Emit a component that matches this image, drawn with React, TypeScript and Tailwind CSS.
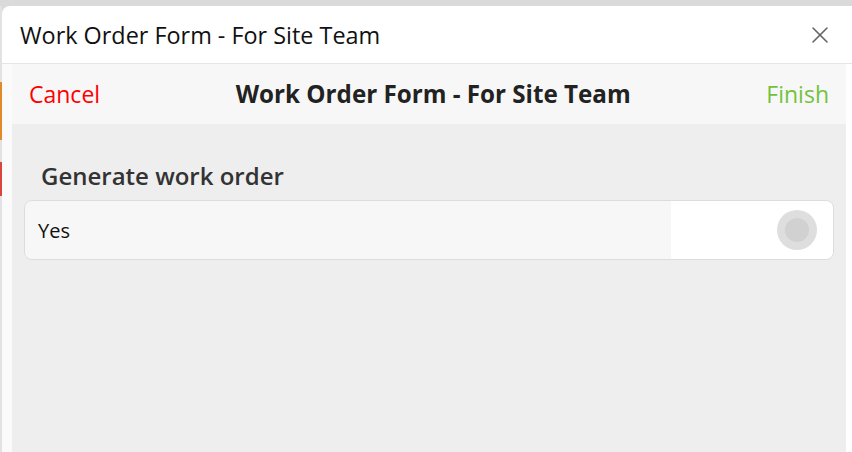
import { X } from "lucide-react";

function Toggle() {
  return (
    <div className="flex h-10 w-10 items-center justify-center rounded-full bg-[#dedede]">
      <div className="h-6 w-6 rounded-full bg-[#d1d1d1]" />
    </div>
  );
}

export default function App() {
  return (
    <div
      className="flex h-[452px] w-[852px] flex-col overflow-hidden bg-[#dadada]"
      style={{ fontFamily: '"Open Sans", "Noto Sans", sans-serif' }}
    >
      <div className="h-[6px] shrink-0" />
      <div className="flex min-h-0 flex-1">
        {/* page behind the modal, peeking on the left */}
        <div className="flex w-[2px] shrink-0 flex-col bg-[#e2e2e2]">
          <div className="h-[76px]" />
          <div className="h-[58px] bg-[#e08a2c]" />
          <div className="h-[22px]" />
          <div className="h-[34px] bg-[#d9443c]" />
        </div>
        <div className="flex min-w-0 flex-1 flex-col overflow-hidden rounded-tl-[8px] bg-white">
          <div className="flex h-[58px] shrink-0 items-center justify-between border-b border-[#e6e6e6] pl-[18px] pr-[18px]">
            <span className="text-[23.4px] leading-[30px] font-medium text-[#111]">Work Order Form - For Site Team</span>
            <X size={28} strokeWidth={1.4} className="text-[#666]" />
          </div>
          <div className="flex min-h-0 flex-1">
            <div className="w-[10px] shrink-0 bg-[#fafafa]" />
            <div className="flex w-[834px] shrink-0 flex-col bg-[#eeeeee]">
              <div className="flex h-[60px] shrink-0 items-center justify-between bg-[#f7f7f7] pl-[17px] pr-[17px]">
                <span className="text-[23px] leading-[30px] text-[#ff0000]">Cancel</span>
                <span className="text-[24.2px] leading-[30px] font-bold text-[#222]">Work Order Form - For Site Team</span>
                <span className="text-[23px] leading-[30px] text-[#74c23c]">Finish</span>
              </div>
              <div className="px-[12px] pt-[37px]">
                <div className="pl-[17px] text-[24px] leading-[30px] font-semibold text-[#333]">Generate work order</div>
                <div className="mt-[9px] flex h-[60px] overflow-hidden rounded-[8px] border border-[#dcdcdc]">
                  <div className="flex flex-1 items-center bg-[#f7f7f7] pl-[13px] pt-[2px] text-[20px] text-[#111]">Yes</div>
                  <div className="flex w-[162px] items-center justify-end bg-white pr-[16px]">
                    <Toggle />
                  </div>
                </div>
              </div>
            </div>
            <div className="flex-1 bg-white" />
          </div>
        </div>
      </div>
    </div>
  );
}
